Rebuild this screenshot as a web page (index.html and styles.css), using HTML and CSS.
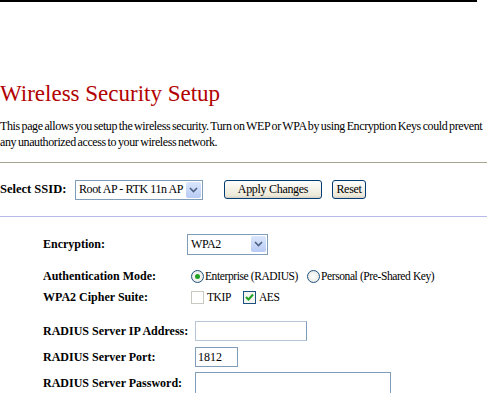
FILE: index.html
```html
<!DOCTYPE html>
<html lang="en">
<head>
    <meta charset="UTF-8">
    <title>Wireless Security Setup</title>
    <link rel="stylesheet" href="styles.css">
</head>
<body>
    <div class="top-rule"></div>

    <h1>Wireless Security Setup</h1>
    <p class="intro">This page allows you setup the wireless security. Turn on WEP or WPA by using Encryption Keys could prevent any unauthorized access to your wireless network.</p>

    <hr class="rule-olive">

    <form class="ssid-row">
        <label class="bold">Select SSID:</label>
        <div class="select ssid-select">
            <span>Root AP - RTK 11n AP</span>
            <span class="arrow"><svg width="9" height="6" viewBox="0 0 9 6"><path d="M1 1 L4.5 4.5 L8 1" fill="none" stroke="#4d6185" stroke-width="1.6"/></svg></span>
        </div>
        <button type="button" class="btn apply">Apply Changes</button>
        <button type="button" class="btn reset">Reset</button>
    </form>

    <hr class="rule-blue">

    <div class="settings">
        <div class="row row-enc">
            <label class="bold">Encryption:</label>
            <div class="select enc-select">
                <span>WPA2</span>
                <span class="arrow"><svg width="9" height="6" viewBox="0 0 9 6"><path d="M1 1 L4.5 4.5 L8 1" fill="none" stroke="#4d6185" stroke-width="1.6"/></svg></span>
            </div>
        </div>
        <div class="row row-auth">
            <label class="bold">Authentication Mode:</label>
            <div class="choices">
                <span class="radio on"></span><span class="opt">Enterprise (RADIUS)</span>
                <span class="radio"></span><span class="opt">Personal (Pre-Shared Key)</span>
            </div>
        </div>
        <div class="row row-cipher">
            <label class="bold">WPA2 Cipher Suite:</label>
            <div class="choices">
                <span class="check off"></span><span class="opt tkip">TKIP</span>
                <span class="check"><svg width="9" height="8" viewBox="0 0 9 8"><path d="M1 4 L3.5 6.5 L8 1.5" fill="none" stroke="#21a121" stroke-width="2"/></svg></span><span class="opt">AES</span>
            </div>
        </div>
        <div class="row row-input row-ip">
            <label class="bold">RADIUS Server IP Address:</label>
            <div class="text-box ip-box pale"></div>
        </div>
        <div class="row row-input">
            <label class="bold">RADIUS Server Port:</label>
            <div class="text-box port-box">1812</div>
        </div>
        <div class="row row-input">
            <label class="bold">RADIUS Server Password:</label>
            <div class="text-box pass-box"></div>
        </div>
    </div>
</body>
</html>
```

FILE: styles.css
```css
body {
    margin: 0;
    font-family: 'Liberation Serif', 'Times New Roman', serif;
    color: #000;
    background-color: #fff;
    width: 490px;
}
.top-rule {
    width: 477px;
    height: 2px;
    background-color: #000;
}
h1 {
    font-family: 'Liberation Serif', serif;
    font-weight: normal;
    font-size: 23px;
    color: #b20000;
    margin: 78px 0 0 0;
    line-height: 27px;
}
.intro {
    font-size: 12px;
    line-height: 16px;
    margin: 11px 0 0 0;
    letter-spacing: -0.4px;
    word-spacing: -0.8px;
}
hr {
    border: none;
    height: 1px;
    margin: 0;
    width: 487px;
}
.rule-olive {
    background-color: #a6a38f;
    margin-top: 12px;
}
.rule-blue {
    background-color: #b9b9e9;
    margin-top: 0;
}
.bold {
    font-weight: bold;
    white-space: nowrap;
}
.ssid-row {
    display: flex;
    align-items: center;
    height: 53px;
    margin: 0;
    font-size: 12.5px;
}
.ssid-row label {
    width: 75px;
}
.select {
    display: flex;
    align-items: center;
    justify-content: space-between;
    border: 1px solid #7f9db9;
    height: 20px;
    padding: 0 1px 0 3px;
    font-size: 12px;
    letter-spacing: -0.4px;
    white-space: nowrap;
    box-sizing: border-box;
    background-color: #fff;
}
.arrow {
    width: 15px;
    height: 16px;
    display: flex;
    align-items: center;
    justify-content: center;
    background: linear-gradient(#dbe6fb, #b7cbf4);
    border-radius: 2px;
}
.ssid-select {
    width: 128px;
}
.btn {
    font-family: 'Liberation Serif', serif;
    font-size: 12px;
    letter-spacing: -0.3px;
    height: 19px;
    padding: 0;
    border: 1px solid #003c74;
    border-radius: 3px;
    background: linear-gradient(#fefefe, #ece9d8 85%, #d6d0c5);
    color: #000;
}
.apply {
    width: 98px;
    margin-left: 21px;
}
.reset {
    width: 34px;
    margin-left: 10px;
}
.settings {
    padding: 17px 0 0 43px;
    font-size: 12px;
}
.row {
    display: flex;
    align-items: center;
    height: 20px;
}
.row label {
    width: 144px;
}
.row-auth {
    margin-top: 12px;
}
.row-cipher {
    margin-top: 1px;
}
.enc-select {
    width: 81px;
    height: 21px;
}
.choices {
    display: flex;
    align-items: center;
    font-size: 11.5px;
    letter-spacing: -0.4px;
    white-space: nowrap;
}
.radio {
    width: 11px;
    height: 11px;
    border: 1px solid #1c5180;
    border-radius: 50%;
    margin: 0 1px 0 4px;
    background: radial-gradient(#fff, #e2e2dc);
    display: flex;
    align-items: center;
    justify-content: center;
}
.radio.on::after {
    content: "";
    width: 5px;
    height: 5px;
    border-radius: 50%;
    background-color: #21a121;
}
.opt {
    margin-right: 5px;
}
.tkip {
    margin-right: 8px;
}
.check {
    width: 11px;
    height: 11px;
    border: 1px solid #1c5180;
    margin: 0 3px 0 4px;
    display: flex;
    align-items: center;
    justify-content: center;
    background-color: #f4f4f0;
}
.check.off {
    border-color: #c8c8c0;
    background-color: #fff;
}
.row-input {
    margin-top: 6px;
}
.row-ip {
    margin-top: 14px;
}
.row-input label {
    width: 152px;
}
.text-box {
    border: 1px solid #7f9db9;
    height: 20px;
    box-sizing: border-box;
    font-size: 12px;
    padding: 1px 2px;
    line-height: 16px;
}
.pale {
    border-color: #b7c7d8;
    border-right-color: #7f9db9;
}
.ip-box {
    width: 112px;
}
.port-box {
    width: 43px;
}
.pass-box {
    width: 196px;
    height: 22px;
}
```
